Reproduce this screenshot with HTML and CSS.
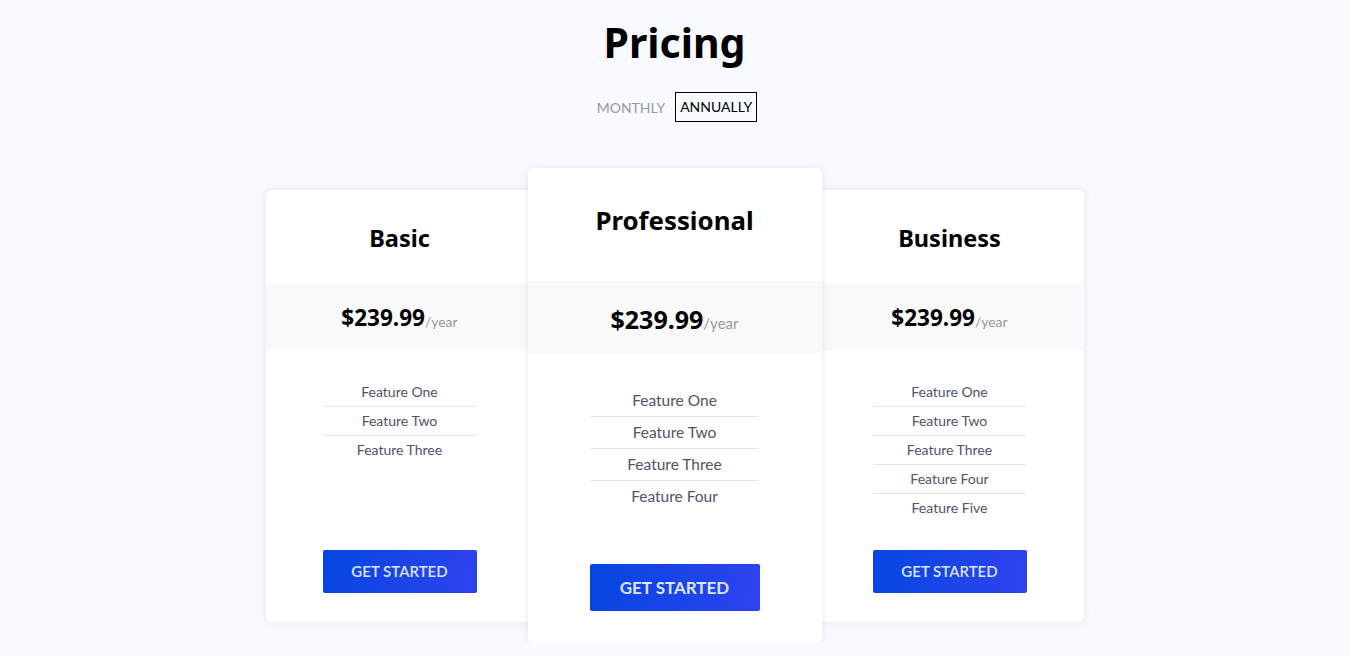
FILE: index.html
```html
<!DOCTYPE html>
<html lang="en">
<head>
<meta charset="utf-8">
<title>Pricing</title>
<link rel="stylesheet" href="styles.css">
</head>
<body>
<main class="page">
  <h1 class="title">Pricing</h1>
  <div class="toggle">
    <span class="toggle-item">MONTHLY</span>
    <span class="toggle-item active">ANNUALLY</span>
  </div>
  <section class="plans">
    <article class="card side">
      <header class="card-head"><h2 class="plan-name">Basic</h2></header>
      <div class="price-band"><span class="amount">$239.99</span><span class="period">/year</span></div>
      <ul class="features">
        <li>Feature One</li>
        <li>Feature Two</li>
        <li>Feature Three</li>
      </ul>
      <button class="cta">GET STARTED</button>
    </article>
    <article class="card featured">
      <header class="card-head"><h2 class="plan-name">Professional</h2></header>
      <div class="price-band"><span class="amount">$239.99</span><span class="period">/year</span></div>
      <ul class="features">
        <li>Feature One</li>
        <li>Feature Two</li>
        <li>Feature Three</li>
        <li>Feature Four</li>
      </ul>
      <button class="cta">GET STARTED</button>
    </article>
    <article class="card side">
      <header class="card-head"><h2 class="plan-name">Business</h2></header>
      <div class="price-band"><span class="amount">$239.99</span><span class="period">/year</span></div>
      <ul class="features">
        <li>Feature One</li>
        <li>Feature Two</li>
        <li>Feature Three</li>
        <li>Feature Four</li>
        <li>Feature Five</li>
      </ul>
      <button class="cta">GET STARTED</button>
    </article>
  </section>
</main>
</body>
</html>
```

FILE: styles.css
```css
* { box-sizing: border-box; }
html, body { margin: 0; padding: 0; }
body {
  background: #f9faff;
  font-family: "Noto Sans", "Open Sans", sans-serif;
  color: #000;
}
.page {
  display: flex;
  flex-direction: column;
  align-items: center;
  padding-top: 14px;
}
.title {
  margin: 0;
  font-size: 41px;
  line-height: 56px;
  font-weight: 700;
}
.toggle {
  display: flex;
  align-items: center;
  gap: 10px;
  margin-top: 22px;
  margin-left: 5px;
  font-family: "Lato", sans-serif;
  font-size: 14px;
}
.toggle-item {
  color: #999;
  padding: 0;
}
.toggle-item.active {
  color: #000;
  border: 1px solid #000;
  padding: 5px 4px;
  line-height: 18px;
}
.plans {
  display: flex;
  align-items: center;
  margin-top: 46px;
}
.card {
  background: #fff;
  border-radius: 6px;
  box-shadow: 0 0 8px rgba(40, 50, 100, 0.10);
  display: flex;
  flex-direction: column;
  align-items: center;
}
.card.side { width: 268px; height: 432px; }
.card.featured {
  width: 294px;
  height: 475px;
  margin: 0 -6px;
  position: relative;
  z-index: 1;
}
.card-head {
  height: 93px;
  padding-top: 3px;
  display: flex;
  align-items: center;
  justify-content: center;
  align-self: stretch;
}
.featured .card-head { height: 113px; padding-top: 0; padding-bottom: 10px; }
.plan-name {
  margin: 0;
  font-size: 23.5px;
  font-weight: 700;
}
.featured .plan-name { font-size: 25.8px; }
.price-band {
  align-self: stretch;
  background: #f9f9f9;
  height: 67px;
  padding-top: 2px;
  display: flex;
  align-items: center;
  justify-content: center;
}
.featured .price-band { height: 73px; }
.amount { font-size: 22.5px; font-weight: 700; }
.featured .amount { font-size: 25px; }
.period {
  font-family: "Lato", sans-serif;
  font-size: 14px;
  color: #999;
  margin-top: 8px;
}
.featured .period { font-size: 15px; }
.features {
  list-style: none;
  margin: 28px 0 0;
  padding: 0;
  width: 153px;
  font-family: "Lato", sans-serif;
  font-size: 14px;
  color: #50526a;
  text-align: center;
}
.features li {
  line-height: 28px;
  border-bottom: 1px solid #e4e4e4;
}
.features li:last-child { border-bottom: none; }
.featured .features { width: 168px; margin-top: 31px; font-size: 15.5px; }
.featured .features li { line-height: 31px; }
.cta {
  margin-top: auto;
  margin-bottom: 29px;
  width: 154px;
  height: 43px;
  border: none;
  border-radius: 2px;
  background: linear-gradient(100deg, #0546e0 0%, #2f42f0 100%);
  color: #dde5ff;
  font-family: "Lato", sans-serif;
  font-size: 15px;
  font-weight: 600;
}
.featured .cta {
  width: 170px;
  height: 47px;
  margin-bottom: 32px;
  font-size: 17px;
  font-weight: 700;
}
```
